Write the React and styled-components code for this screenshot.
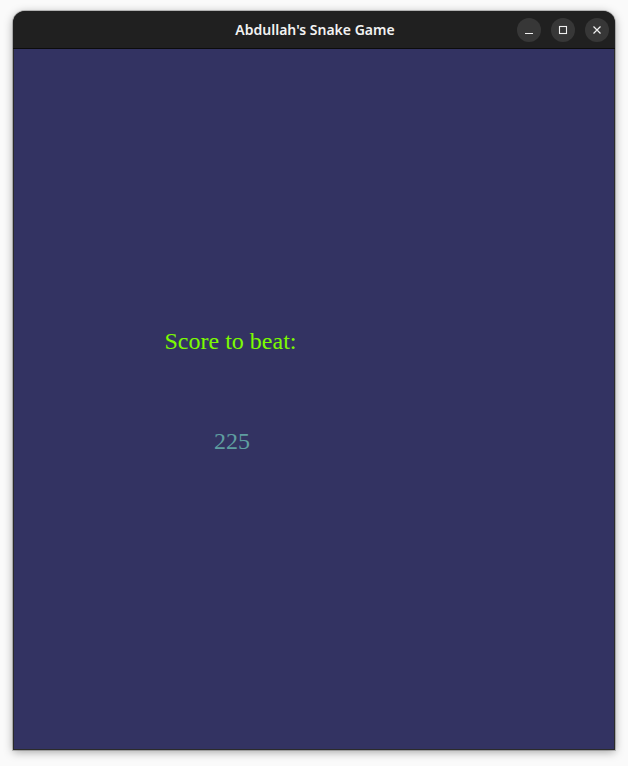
import React from "react";
import styled, { createGlobalStyle } from "styled-components";

const GlobalStyle = createGlobalStyle`
  html, body {
    margin: 0;
    padding: 0;
    background: #fafafa;
  }
`;

const Page = styled.div`
  width: 628px;
  height: 766px;
  padding: 11px 0 0 13px;
  box-sizing: border-box;
`;

const Window = styled.div`
  width: 602px;
  display: flex;
  flex-direction: column;
  border-radius: 12px 12px 0 0;
  overflow: hidden;
  background: #2b2b2b;
  box-shadow: 0 2px 10px rgba(0, 0, 0, 0.35), 0 0 0 1px rgba(0, 0, 0, 0.2);
`;

const TitleBar = styled.div`
  height: 37px;
  display: flex;
  align-items: center;
  justify-content: center;
  position: relative;
  background: #202020;
  border-bottom: 1px solid #0c0c0c;
  color: #f2f2f2;
  font-family: "Noto Sans", "Open Sans", sans-serif;
  font-weight: 600;
  font-size: 14px;
  padding-left: 2px;
`;

const Controls = styled.div`
  position: absolute;
  right: 6px;
  top: 7px;
  display: flex;
  gap: 10px;
`;

const CtrlButton = styled.div`
  width: 24px;
  height: 24px;
  border-radius: 50%;
  background: #373737;
  display: flex;
  align-items: center;
  justify-content: center;
`;

// game area
const Body = styled.div`
  height: 700px;
  display: flex;
  margin: 0 1px 1px 1px;
  background: #333362;
`;

const Board = styled.div`
  width: 436px;
  display: flex;
  flex-direction: column;
  align-items: center;
  padding-top: 278px;
`;

const Label = styled.div`
  font-family: "Liberation Serif", "Times New Roman", serif;
  font-size: 24px;
  line-height: 28px;
  color: ${(p) => p.color};
  margin-bottom: ${(p) => p.gap || 0}px;
  margin-right: ${(p) => p.shift || 0}px;
`;

export default function App() {
  return (
    <>
      <GlobalStyle />
      <Page>
        <Window>
          <TitleBar>
            Abdullah's Snake Game
            <Controls>
              <CtrlButton>
                <svg width="10" height="10" viewBox="0 0 10 10">
                  <path d="M1 8.5h8" stroke="#f0f0f0" strokeWidth="1.2" />
                </svg>
              </CtrlButton>
              <CtrlButton>
                <svg width="10" height="10" viewBox="0 0 10 10">
                  <rect x="1.5" y="1.5" width="7" height="7" fill="none" stroke="#f0f0f0" strokeWidth="1.1" />
                </svg>
              </CtrlButton>
              <CtrlButton>
                <svg width="10" height="10" viewBox="0 0 10 10">
                  <path d="M1.5 1.5l7 7M8.5 1.5l-7 7" stroke="#f0f0f0" strokeWidth="1.2" />
                </svg>
              </CtrlButton>
            </Controls>
          </TitleBar>
          <Body>
            <Board>
              <Label color="#7cfc00" gap={72} shift={3}>Score to beat:</Label>
              <Label color="#5f9ea0">225</Label>
            </Board>
          </Body>
        </Window>
      </Page>
    </>
  );
}
